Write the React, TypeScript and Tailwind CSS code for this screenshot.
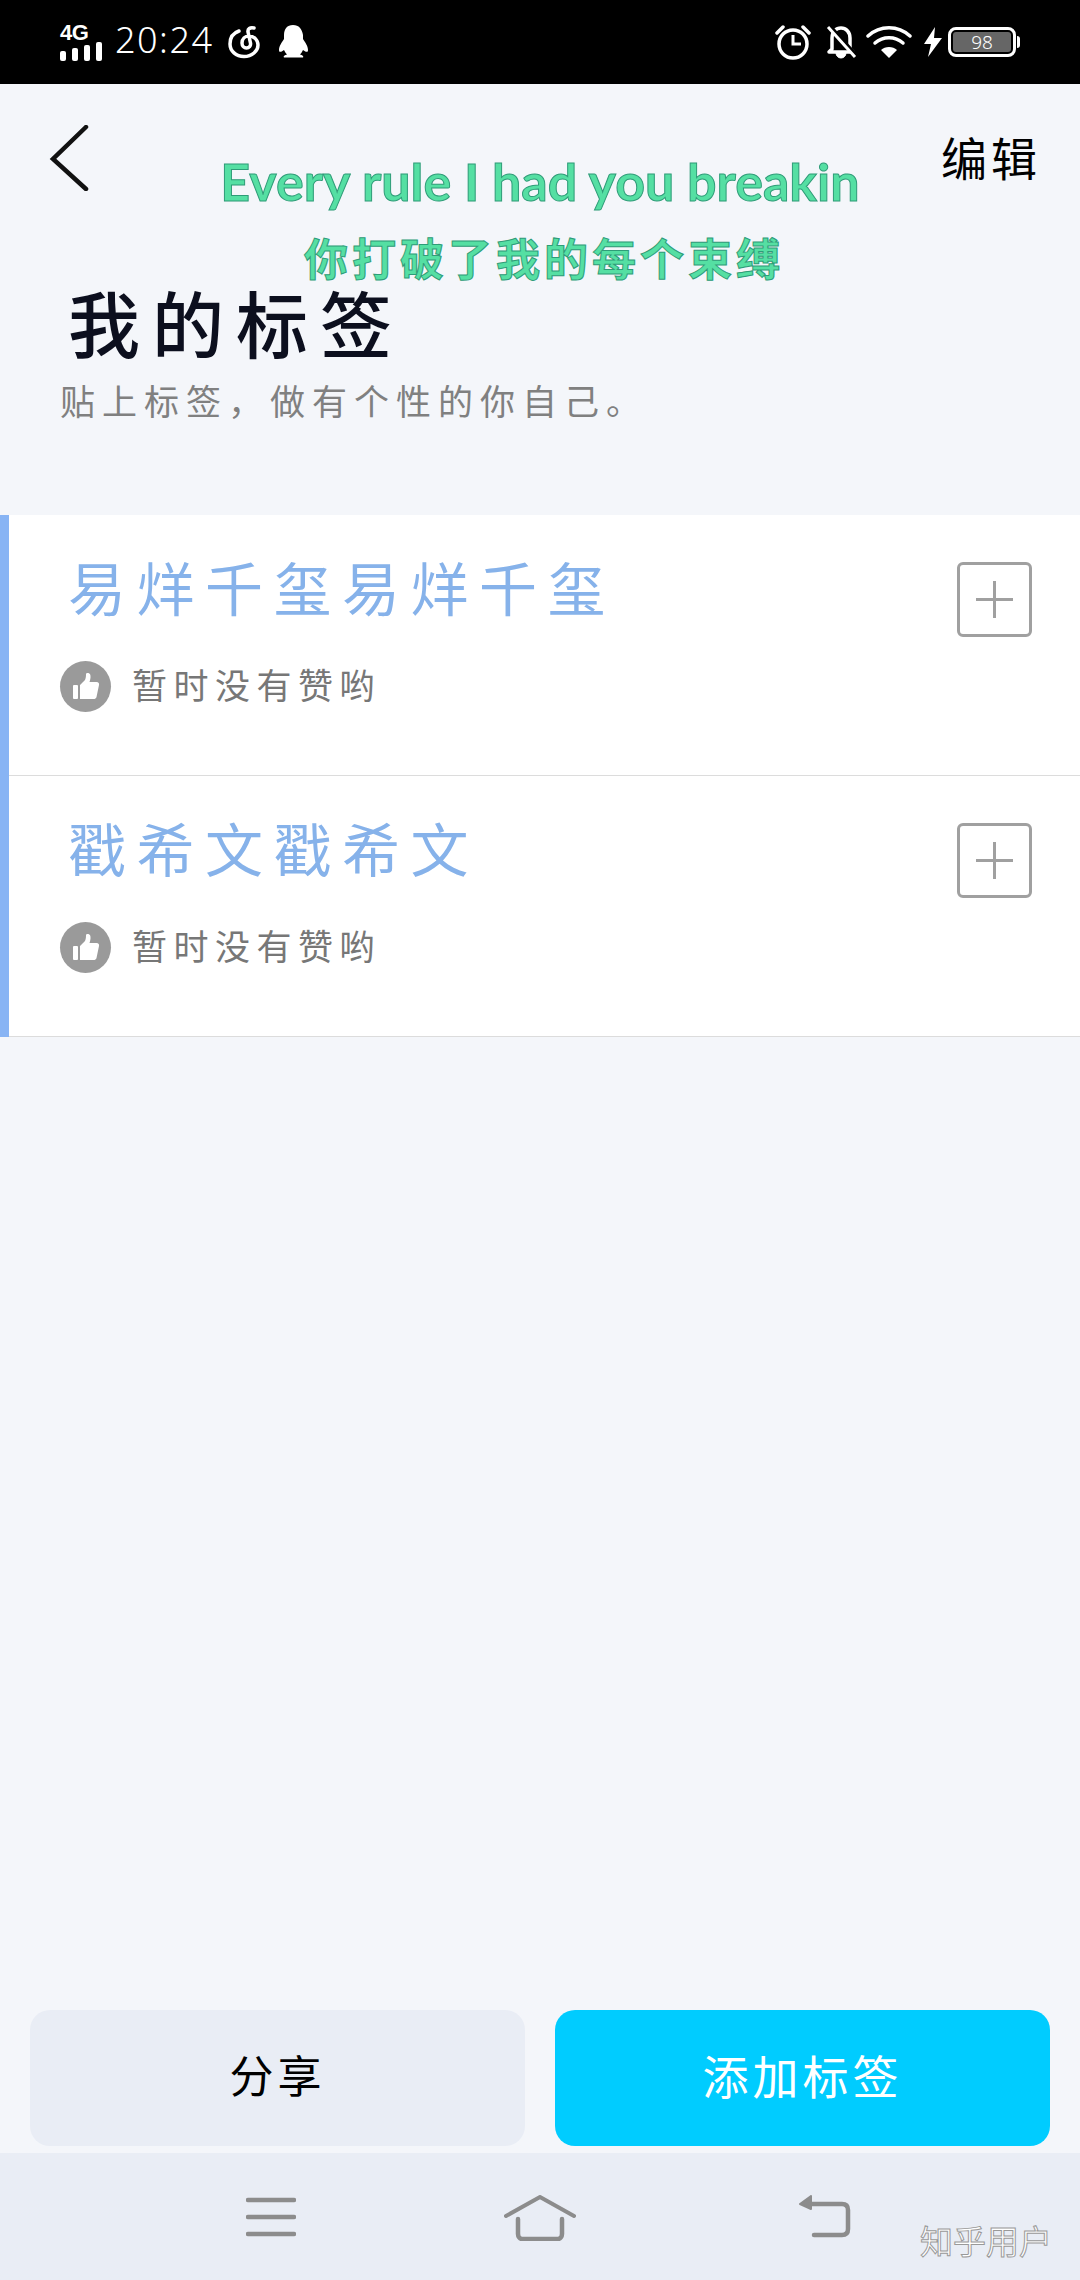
import React from "react";

const handFont = "[font-family:'Noto_Sans_CJK_SC','Noto_Sans',sans-serif]";

function StatusBar() {
  return (
    <div className="flex h-[84px] shrink-0 items-center justify-between bg-black pl-[60px] pr-[60px] text-white">
      <div className="flex items-center">
        <div className="flex w-[44px] flex-col">
          <span className="h-[17px] text-[22px] font-bold leading-[17px] tracking-[-0.5px] [font-family:'Liberation_Sans',sans-serif]">
            4G
          </span>
          <svg width="42" height="20" viewBox="0 0 42 20" fill="white">
            <rect x="0" y="10" width="6" height="10" rx="2" />
            <rect x="12" y="7" width="6" height="13" rx="2" />
            <rect x="24" y="4" width="6" height="16" rx="2" />
            <rect x="36" y="1" width="6" height="19" rx="2" />
          </svg>
        </div>
        <span className="mb-[4px] ml-[11px] w-[100px] text-[36px] font-light leading-none tracking-[1.5px] [font-family:'Noto_Sans',sans-serif]">
          20:24
        </span>
        <svg width="32" height="34" viewBox="0 0 32 34" fill="none" stroke="white" className="ml-[13px]">
          <path
            d="M11 6C5 8 2 13 2 19c0 7 6 12.500 14 12.500S30 26 30 20c0-5-4-9-9-9-4 0-7 3-7 7 0 3 2 5 4.500 5S23 21 22.500 18L20 7c-.5-3 2-5 6-4"
            strokeWidth="3.500"
            strokeLinecap="round"
          />
        </svg>
        <svg width="30" height="34" viewBox="0 0 30 34" fill="white" className="ml-[18px]">
          <path d="M15 0c-6 0-9 4-9 10v4c-2 3-5 7-5 11 0 2 1 2.500 3.500 1l1.500-1c1 2 2 3.500 3 4.500-2 .5-4 1.500-3 3h19c1-1.500-1-2.500-3-3 1-1 2-2.500 3-4.500l1.500 1c2.500 1.500 3.500 1 3.500-1 0-4-3-8-5-11v-4C24 4 21 0 15 0z" />
        </svg>
      </div>

      <div className="flex items-center">
        <svg width="36" height="36" viewBox="0 0 36 36" fill="none" stroke="white" strokeWidth="3.500">
          <circle cx="18" cy="20" r="14" />
          <path d="M18 11v9h8" strokeWidth="3" />
          <path d="M2 9l6-6M34 9l-6-6" strokeLinecap="round" />
        </svg>
        <svg width="32" height="34" viewBox="0 0 32 34" fill="none" stroke="white" className="ml-[14px]">
          <path d="M7 24V13c0-6 4-10 9-10s9 4 9 10v11l3 3H4z" strokeWidth="3.500" strokeLinejoin="round" />
          <path d="M11 28c0 3 2.500 5 5 5s5-2 5-5" fill="white" strokeWidth="1" />
          <path d="M3 2l27 30" strokeWidth="3.500" stroke="black" transform="translate(2 -1)" />
          <path d="M3 2l27 30" strokeWidth="3" />
        </svg>
        <svg width="46" height="34" viewBox="0 0 46 34" fill="none" stroke="white" strokeWidth="3.500" strokeLinecap="round" className="ml-[9px]">
          <path d="M2 11c12-11 30-11 42 0" />
          <path d="M9 18c8-7 20-7 28 0" />
          <path d="M23 33l-8-8c4-4 12-4 16 0z" fill="white" stroke="none" />
        </svg>
        <svg width="20" height="30" viewBox="0 0 20 30" fill="white" className="ml-[11px]">
          <path d="M12 0L1 17h7l-3 13L19 11h-8z" />
        </svg>
        <div className="ml-[5px] flex items-center">
          <div className="flex h-[30px] w-[68px] rounded-[8px] border-[3px] border-white p-[2px]">
            <div className="flex flex-1 items-center justify-center rounded-[3px] bg-[#666666] text-[19px] font-light leading-none [font-family:'Noto_Sans',sans-serif]">
              98
            </div>
          </div>
          <div className="ml-[1px] h-[12px] w-[3px] rounded-r-full bg-white" />
        </div>
      </div>
    </div>
  );
}

function ThumbBadge() {
  return (
    <div className="flex h-[51px] w-[51px] items-center justify-center rounded-full bg-[#9a9a9a]">
      <svg width="32" height="32" viewBox="0 0 32 32" fill="white">
        <rect x="3" y="14" width="5" height="14" rx="1" />
        <path d="M10 14l5-5c1-2 1-5 1-6 0-1.500 3-1.500 4 0 1 2 .5 5-.5 8h7c2 0 3 1.500 2.500 3l-2.500 12c-.5 1.500-1.500 2-3 2H10z" />
      </svg>
    </div>
  );
}

function PlusBox() {
  return (
    <div className="flex h-[75px] w-[75px] items-center justify-center rounded-[6px] border-[3px] border-[#a0a0a0]">
      <svg width="37" height="37" viewBox="0 0 37 37" stroke="#a0a0a0" strokeWidth="3">
        <path d="M18.500 0v37M0 18.500h37" />
      </svg>
    </div>
  );
}

function TagRow({ title }: { title: string }) {
  return (
    <div className="flex h-[261px] border-b border-[#dcdcdc] bg-white pl-[51px] pr-[48px]">
      <div className="flex-1">
        <div className={`mt-[33px] ml-[8px] text-[58px] leading-[76px] tracking-[10.500px] text-[#86b2ea] ${handFont}`}>
          {title}
        </div>
        <div className="mt-[37px] flex items-center">
          <ThumbBadge />
          <span className={`ml-[21px] -translate-y-[3px] text-[35px] leading-[51px] tracking-[6.500px] text-[#777777] ${handFont}`}>
            暂时没有赞哟
          </span>
        </div>
      </div>
      <div className="mt-[47px]">
        <PlusBox />
      </div>
    </div>
  );
}

export default function App() {
  return (
    <div className="relative flex h-[2280px] w-[1080px] flex-col overflow-hidden bg-[#f4f6fa]">
      <StatusBar />

      {/* lyric overlay floats above the page */}
      <div className="absolute left-0 right-0 top-[153px] flex flex-col items-center">
        <div className="text-[52px] font-bold leading-[56px] text-[#55dfa3] [-webkit-text-stroke:1px_#2f9c78] [font-family:'Lato',sans-serif]">
          Every rule I had you breakin
        </div>
        <div className={`mt-[22px] pl-[8px] text-[44px] font-bold leading-[52px] tracking-[4px] text-[#55dfa3] [-webkit-text-stroke:1px_#2f9c78] ${handFont}`}>
          你打破了我的每个束缚
        </div>
      </div>

      <div className="flex items-start justify-between pl-[49px] pr-[39px] pt-[41px]">
        <svg width="40" height="66" viewBox="0 0 40 66" fill="none" stroke="#111111" strokeWidth="4.500" strokeLinecap="round">
          <path d="M37 2L4 34l33 30" />
        </svg>
        <span className={`mt-[3px] text-[46px] leading-[56px] tracking-[4px] text-black ${handFont}`}>编辑</span>
      </div>

      <div className={`mt-[88px] pl-[68px] text-[72px] font-medium leading-[84px] tracking-[12px] text-[#0c0f1e] ${handFont}`}>
        我的标签
      </div>
      <div className={`mt-[12px] pl-[60px] text-[35px] leading-[50px] tracking-[7px] text-[#808080] ${handFont}`}>
        贴上标签，做有个性的你自己。
      </div>

      <div className="mt-[90px] border-l-[9px] border-[#88b4f4]">
        <TagRow title="易烊千玺易烊千玺" />
        <TagRow title="戳希文戳希文" />
      </div>

      <div className="flex-1" />

      <div className="flex gap-[30px] px-[30px] pb-[7px]">
        <button className={`flex h-[136px] flex-1 items-center justify-center rounded-[20px] bg-[#e9edf5] pb-[8px] text-[44px] tracking-[4px] text-black ${handFont}`}>
          分享
        </button>
        <button className={`flex h-[136px] flex-1 items-center justify-center rounded-[20px] bg-[#00ccff] pb-[8px] text-[46px] tracking-[4px] text-white ${handFont}`}>
          添加标签
        </button>
      </div>

      <div className="relative flex h-[127px] shrink-0 items-start bg-[#e9edf5] pl-[246px] pt-[42px]">
        <svg width="50" height="40" viewBox="0 0 50 40" stroke="#8c8c8c" strokeWidth="4.500" strokeLinecap="round" className="mt-[2px]">
          <path d="M2 3h46M2 20h46M2 37h46" />
        </svg>
        <svg width="72" height="46" viewBox="0 0 72 46" fill="none" stroke="#8c8c8c" strokeWidth="4" strokeLinecap="round" strokeLinejoin="round" className="ml-[208px]">
          <path d="M2 21L36 2l34 19" />
          <path d="M14 24v15c0 3 2 5 4 5h36c2 0 4-2 4-5V24" strokeWidth="4.500" />
        </svg>
        <svg width="54" height="44" viewBox="0 0 54 44" fill="none" stroke="#8c8c8c" strokeWidth="4.500" strokeLinecap="round" strokeLinejoin="round" className="ml-[222px]">
          <path d="M12 9h32c4 0 6 2 6 6v19c0 4-2 6-6 6H16" />
          <path d="M2 9l11-8v13z" fill="#8c8c8c" strokeWidth="2" />
        </svg>
        {/* site watermark stamped on the corner */}
        <span className="absolute right-[28px] top-[69px] text-[33px] leading-[36px] text-white [-webkit-text-stroke:1px_#999999] [font-family:'Noto_Sans_CJK_SC',sans-serif]">
          知乎用户
        </span>
      </div>
    </div>
  );
}
